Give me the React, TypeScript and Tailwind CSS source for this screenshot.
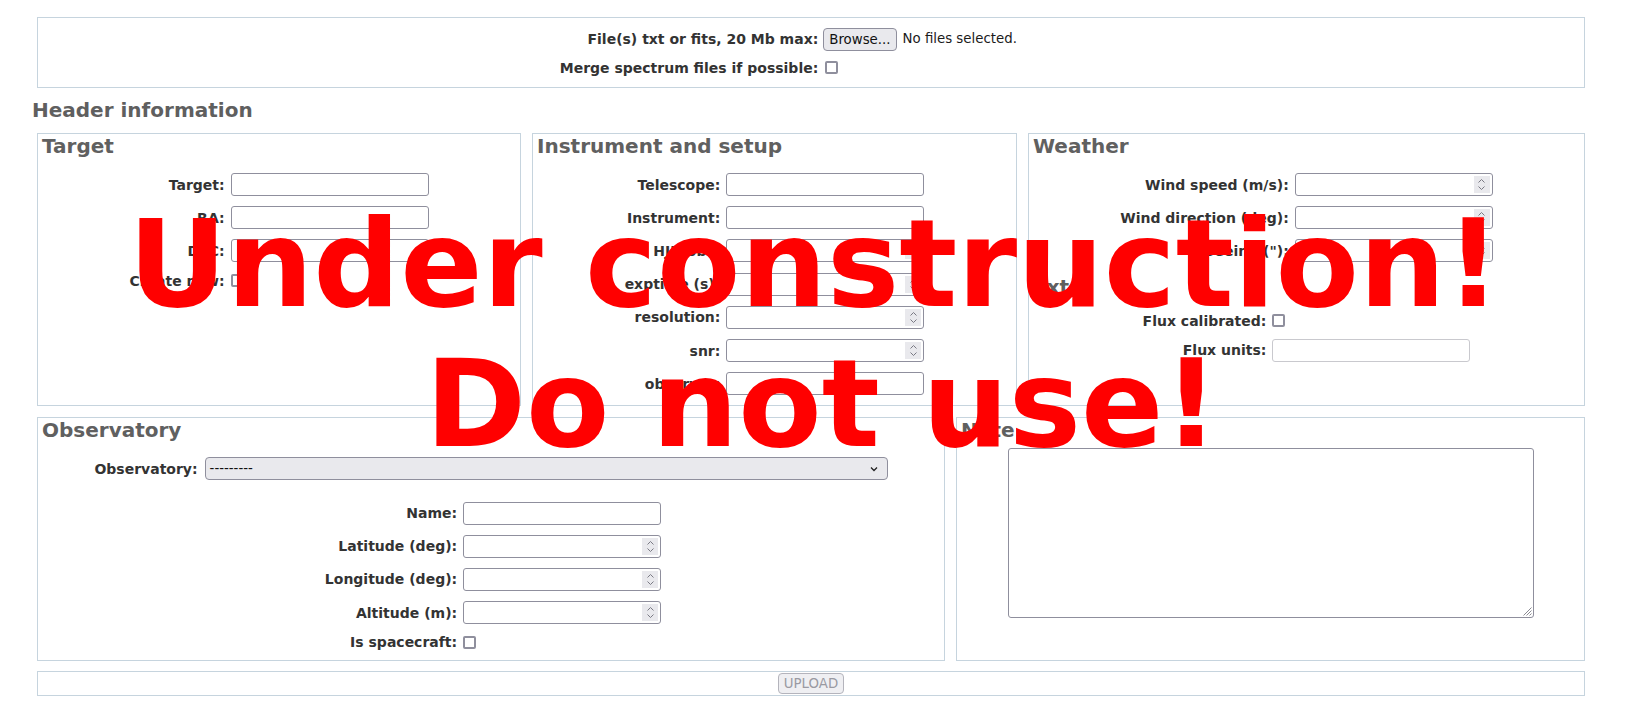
import React from "react";

const LBL = "justify-self-end whitespace-nowrap text-[14px] font-bold leading-[16px] text-[#333333]";
const LEGEND = "text-[20px] font-bold leading-[23px] text-[#606060] whitespace-nowrap";
const BOX = "border border-[#c6d4de]";

function TextInput({ disabled = false }: { disabled?: boolean }) {
  return (
    <input
      type="text"
      disabled={disabled}
      className={
        "block h-[23px] w-[198px] rounded-[3px] border bg-white px-[3px] text-[13.33px] outline-none " +
        (disabled ? "border-[#c9c9ce]" : "border-[#8f8f9d]")
      }
    />
  );
}

function NumInput() {
  return (
    <div className="relative h-[23px] w-[198px] rounded-[3px] border border-[#8f8f9d] bg-white">
      <input type="text" className="block h-full w-[175px] bg-transparent px-[3px] text-[13.33px] outline-none" />
      <div className="absolute bottom-[2px] right-[2px] top-[2px] flex w-[16px] items-center justify-center bg-[#e9e9ed]">
        <svg width="9" height="15" viewBox="0 0 9 15" fill="none">
          <path d="M1.5 5.5 L4.5 2.5 L7.5 5.5" stroke="#7a7a84" strokeWidth="1" />
          <path d="M1.5 9.5 L4.5 12.5 L7.5 9.5" stroke="#7a7a84" strokeWidth="1" />
        </svg>
      </div>
    </div>
  );
}

function Check() {
  return (
    <input
      type="checkbox"
      className="block h-[13px] w-[13px] appearance-none rounded-[2px] border-2 border-[#8f8f9d] bg-white"
    />
  );
}

export default function App() {
  return (
    <div className="relative h-[711px] w-[1627px] overflow-hidden bg-white font-['DejaVu_Sans',sans-serif]">
      <div className="ml-[37px] flex w-[1548px] flex-col pt-[16.6px]">
        {/* Upload file box */}
        <div className={BOX + " pb-[11px] pt-[10px]"}>
          <div className="mx-auto grid w-fit grid-cols-[auto_239px] items-center gap-x-[5px] gap-y-[9px]">
            <label className={LBL}>File(s) txt or fits, 20 Mb max:</label>
            <div className="flex items-center">
              <button className="h-[23px] rounded-[4px] border border-[#8f8f9d] bg-[#e9e9ed] px-[5px] text-[13.33px] leading-[21px] text-[#111]">
                Browse...
              </button>
              <span className="ml-[6px] text-[13.33px] text-[#1b1b1b]">No files selected.</span>
            </div>
            <label className={LBL}>Merge spectrum files if possible:</label>
            <div className="pl-[2px]">
              <Check />
            </div>
          </div>
        </div>

        <h3 className="-ml-[5px] mb-[11px] mt-[11px] text-[20px] font-bold leading-[23px] text-[#5f5f5f]">
          Header information
        </h3>

        {/* Row 1 */}
        <div className="flex h-[273px] gap-[11px]">
          <div className={BOX + " w-[484px] px-[4px] pt-[1.5px]"}>
            <div className={LEGEND}>Target</div>
            <div className="mx-auto mt-[15px] grid w-fit grid-cols-[auto_198px] items-center gap-x-[6px] gap-y-[10.2px]">
              <label className={LBL}>Target:</label>
              <TextInput />
              <label className={LBL}>RA:</label>
              <TextInput />
              <label className={LBL}>DEC:</label>
              <TextInput />
              <label className={LBL}>Create new:</label>
              <Check />
            </div>
          </div>

          <div className={BOX + " w-[485px] px-[4px] pt-[1.5px]"}>
            <div className={LEGEND}>Instrument and setup</div>
            <div className="mx-auto mt-[15px] grid w-fit grid-cols-[auto_198px] items-center gap-x-[6px] gap-y-[10.2px]">
              <label className={LBL}>Telescope:</label>
              <TextInput />
              <label className={LBL}>Instrument:</label>
              <TextInput />
              <label className={LBL}>HJD obs:</label>
              <NumInput />
              <label className={LBL}>exptime (s):</label>
              <NumInput />
              <label className={LBL}>resolution:</label>
              <NumInput />
              <label className={LBL}>snr:</label>
              <NumInput />
              <label className={LBL}>observer:</label>
              <TextInput />
            </div>
          </div>

          <div className={BOX + " w-[557px] px-[4px] pt-[1.5px]"}>
            <div className={LEGEND}>Weather</div>
            <div className="mx-auto mt-[15px] grid w-fit grid-cols-[auto_198px] items-center gap-x-[6px] gap-y-[10.2px]">
              <label className={LBL}>Wind speed (m/s):</label>
              <NumInput />
              <label className={LBL}>Wind direction (deg):</label>
              <NumInput />
              <label className={LBL}>Seeing ("):</label>
              <NumInput />
            </div>
            <div className={LEGEND + " mt-[13.5px]"}>Ext</div>
            <div className="mx-auto mt-[14px] grid w-fit grid-cols-[auto_198px] items-center gap-x-[6px] gap-y-[10px]">
              <label className={LBL}>Flux calibrated:</label>
              <Check />
              <label className={LBL}>Flux units:</label>
              <TextInput disabled />
            </div>
          </div>
        </div>

        {/* Row 2 */}
        <div className="mt-[11px] flex h-[244px] gap-[11px]">
          <div className={BOX + " w-[908px] px-[4px] pt-[1.5px]"}>
            <div className={LEGEND}>Observatory</div>
            <div className="mx-auto mt-[15px] flex w-fit items-center gap-x-[7px]">
              <label className={LBL}>Observatory:</label>
              <div className="flex h-[23px] w-[683px] items-center justify-between rounded-[4px] border border-[#8f8f9d] bg-[#e9e9ed] pl-[4px] pr-[8px]">
                <span className="text-[13.33px] leading-[16px] text-[#111]">---------</span>
                <svg width="10" height="8" viewBox="0 0 10 8" fill="none">
                  <path d="M2 2.5 L5 5.5 L8 2.5" stroke="#222" strokeWidth="1.3" />
                </svg>
              </div>
            </div>
            <div className="mx-auto mt-[21.5px] grid w-fit grid-cols-[auto_198px] items-center gap-x-[6px] gap-y-[10.2px] pl-[4px]">
              <label className={LBL}>Name:</label>
              <TextInput />
              <label className={LBL}>Latitude (deg):</label>
              <NumInput />
              <label className={LBL}>Longitude (deg):</label>
              <NumInput />
              <label className={LBL}>Altitude (m):</label>
              <NumInput />
              <label className={LBL + " leading-[12px]"}>Is spacecraft:</label>
              <Check />
            </div>
          </div>

          <div className={BOX + " w-[629px] px-[4px] pt-[1.5px]"}>
            <div className={LEGEND}>Note</div>
            <div className="relative mx-auto mt-[6px] h-[170px] w-[526px]">
              <textarea className="block h-full w-full resize-none rounded-[3px] border border-[#8f8f9d] bg-white outline-none" />
              <svg className="absolute bottom-[2px] right-[2px]" width="9" height="9" viewBox="0 0 9 9" fill="none">
                <path d="M8.5 0.5 L0.5 8.5 M8.5 3.5 L3.5 8.5 M8.5 6.5 L6.5 8.5" stroke="#8a8a92" strokeWidth="1" />
              </svg>
            </div>
          </div>
        </div>

        {/* Upload bar */}
        <div className={BOX + " mt-[10px] flex h-[25px] items-center justify-center"}>
          <button
            disabled
            className="h-[21px] rounded-[4px] border border-[#b4b4bc] bg-[#efeff2] px-[5px] text-[13.33px] leading-[19px] text-[#9a9aa2]"
          >
            UPLOAD
          </button>
        </div>
      </div>

      {/* Under construction overlay */}
      <div className="pointer-events-none absolute left-0 right-0 top-[194px] text-center text-[121.5px] font-bold leading-[140px] text-[#ff0000]">
        <div className="pl-[2px]">Under construction!</div>
        <div className="pl-[17px]">Do not use!</div>
      </div>
    </div>
  );
}
